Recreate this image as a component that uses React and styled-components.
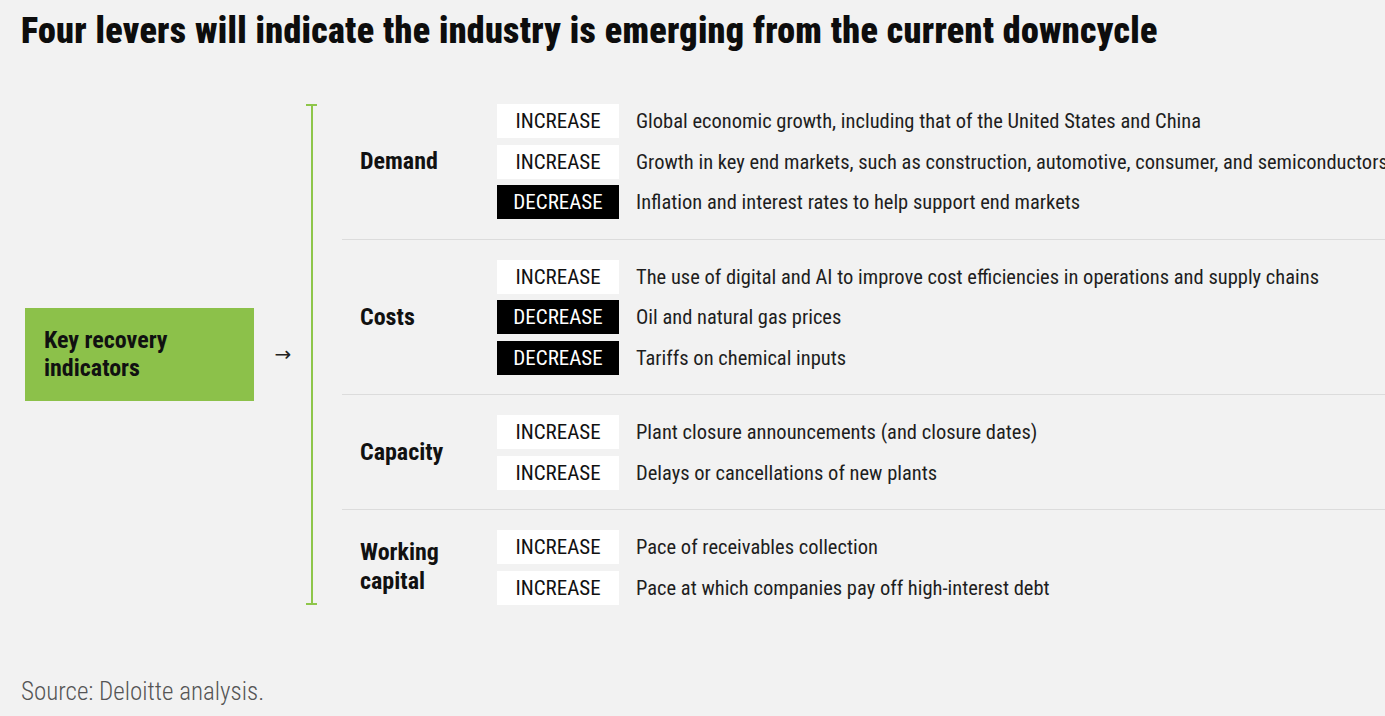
import React from "react";
import styled, { createGlobalStyle } from "styled-components";

const Global = createGlobalStyle`
  html, body { margin: 0; padding: 0; background: #f2f2f2; }
  body { width: 1385px; height: 716px; overflow: hidden; font-family: "Roboto Condensed", "Roboto", "Liberation Sans", sans-serif; color: #161616; }
`;

const Page = styled.div`
  padding: 9px 0 0 0;
  width: 1385px;
  box-sizing: border-box;
`;

const Title = styled.h1`
  margin: 0 0 0 21px;
  font-family: "Roboto Condensed", "Roboto", sans-serif;
  font-weight: 900;
  font-size: 36px;
  line-height: 44px;
  letter-spacing: 0.3px;
  color: #0d0d0d;
  white-space: nowrap;
`;

const Main = styled.div`
  display: flex;
  align-items: center;
  margin-top: 51px;
`;

const KeyBox = styled.div`
  margin-left: 25px;
  width: 229px;
  height: 93px;
  box-sizing: border-box;
  padding-left: 19px;
  background: #8cc14a;
  display: flex;
  align-items: center;
  font-weight: 700;
  font-size: 24px;
  line-height: 28px;
  color: #111;
  flex-shrink: 0;
`;

const Arrow = styled.div`
  width: 52px;
  box-sizing: border-box;
  padding-left: 6px;
  flex-shrink: 0;
  text-align: center;
  font-family: "DejaVu Sans", sans-serif;
  font-size: 20px;
  color: #222;
`;

const Bracket = styled.div`
  align-self: stretch;
  width: 11px;
  flex-shrink: 0;
  position: relative;
  &::before {
    content: "";
    position: absolute;
    left: 4.5px;
    top: 0;
    bottom: 0;
    width: 2px;
    background: #8ec64a;
  }
  &::after {
    content: "";
    position: absolute;
    left: 0;
    right: 0;
    top: 0;
    bottom: 0;
    border-top: 2px solid #8ec64a;
    border-bottom: 2px solid #8ec64a;
  }
`;

const Sections = styled.div`
  margin-left: 25px;
  flex: 1;
  display: flex;
  flex-direction: column;
`;

const Section = styled.div`
  display: flex;
  align-items: center;
  padding: 19.75px 0;
  border-bottom: 1px solid #dcdcdc;
  &:first-child { padding-top: 0; }
  &:last-child { padding-bottom: 0; border-bottom: none; }
`;

const Label = styled.div`
  width: 155px;
  flex-shrink: 0;
  box-sizing: border-box;
  padding-left: 18px;
  font-weight: 700;
  font-size: 24px;
  line-height: 29px;
  color: #111;
`;

const Rows = styled.div`
  display: flex;
  flex-direction: column;
  gap: 6.5px;
`;

const Row = styled.div`
  display: flex;
  align-items: center;
  white-space: nowrap;
`;

const Badge = styled.div`
  width: 122px;
  height: 34px;
  flex-shrink: 0;
  display: flex;
  align-items: center;
  justify-content: center;
  background: ${(p) => (p.$down ? "#000" : "#fff")};
  color: ${(p) => (p.$down ? "#fff" : "#111")};
  font-size: 21px;
  font-weight: 400;
  margin-right: 17px;
`;

const Desc = styled.div`
  font-size: 20.5px;
  color: #1e1e1e;
`;

const Source = styled.div`
  margin: 72px 0 0 21px;
  font-size: 25px;
  line-height: 30px;
  font-weight: 300;
  color: #555;
`;

const data = [
  {
    label: ["Demand"],
    rows: [
      ["INCREASE", "Global economic growth, including that of the United States and China"],
      ["INCREASE", "Growth in key end markets, such as construction, automotive, consumer, and semiconductors"],
      ["DECREASE", "Inflation and interest rates to help support end markets"],
    ],
  },
  {
    label: ["Costs"],
    rows: [
      ["INCREASE", "The use of digital and AI to improve cost efficiencies in operations and supply chains"],
      ["DECREASE", "Oil and natural gas prices"],
      ["DECREASE", "Tariffs on chemical inputs"],
    ],
  },
  {
    label: ["Capacity"],
    rows: [
      ["INCREASE", "Plant closure announcements (and closure dates)"],
      ["INCREASE", "Delays or cancellations of new plants"],
    ],
  },
  {
    label: ["Working", "capital"],
    rows: [
      ["INCREASE", "Pace of receivables collection"],
      ["INCREASE", "Pace at which companies pay off high-interest debt"],
    ],
  },
];

export default function App() {
  return (
    <Page>
      <Global />
      <Title>Four levers will indicate the industry is emerging from the current downcycle</Title>
      <Main>
        <KeyBox>
          <span>
            Key recovery
            <br />
            indicators
          </span>
        </KeyBox>
        <Arrow>→</Arrow>
        <Bracket />
        <Sections>
          {data.map((s, i) => (
            <Section key={i}>
              <Label>
                {s.label.map((l, j) => (
                  <div key={j}>{l}</div>
                ))}
              </Label>
              <Rows>
                {s.rows.map(([b, t], j) => (
                  <Row key={j}>
                    <Badge $down={b === "DECREASE"}>{b}</Badge>
                    <Desc>{t}</Desc>
                  </Row>
                ))}
              </Rows>
            </Section>
          ))}
        </Sections>
      </Main>
      <Source>Source: Deloitte analysis.</Source>
    </Page>
  );
}
